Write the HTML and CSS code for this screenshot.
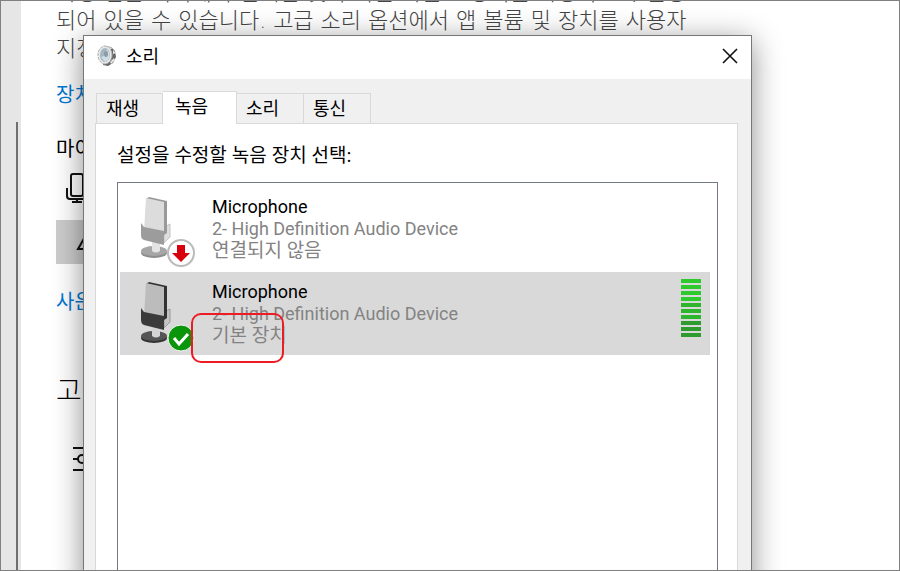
FILE: index.html
```html
<!DOCTYPE html>
<html lang="ko">
<head>
    <meta charset="UTF-8">
    <meta name="viewport" content="width=device-width, initial-scale=1.0">
    <title>소리</title>
    <link rel="stylesheet" href="styles.css">
</head>
<body>
    <div class="screen">
        <div class="sidebar"></div>
        <main class="settings">
            <p class="note">특정 앱은 여기에서 선택한 것과 다른 사운드 장치를 사용하도록 설정<br>되어 있을 수 있습니다. 고급 소리 옵션에서 앱 볼륨 및 장치를 사용자<br>지정합니다.</p>
            <a class="link" href="#">장치 속성</a>
            <h3 class="label">마이크 테스트</h3>
            <svg class="mic" width="24" height="32" viewBox="0 0 24 32" fill="none" stroke="#111" stroke-width="2">
                <rect x="5" y="1" width="12" height="22" rx="2"/>
                <path d="M1 15v8q0 3 3 3h14q3 0 3-3v-8M11 26v3M6 29h10"/>
            </svg>
            <button class="trouble">
                <svg width="20" height="18" viewBox="0 0 20 18" fill="none" stroke="#111" stroke-width="2"><path d="M10 2L2 16h16zM10 7v5"/></svg>
                문제 해결
            </button>
            <a class="link manage" href="#">사운드 장치 관리</a>
            <h2 class="heading">고급 사운드 옵션</h2>
            <svg class="sliders" width="28" height="26" viewBox="0 0 28 26" fill="none" stroke="#111" stroke-width="2">
                <path d="M0 2h28M0 13h5M13 13h15M0 24h28"/>
                <circle cx="9" cy="13" r="4"/>
            </svg>
        </main>

        <section class="dialog">
            <header class="titlebar">
                <svg width="20" height="22" viewBox="0 0 20 22">
                    <path d="M8 1l6 1 4 4 1 6-3 6-5 3-5-1z" fill="#666"/>
                    <path d="M10 1l5 2-2 3zM16 5l3 3-3 1zM17 13l1 2-4 4-1-2z" fill="#e4e4e4"/>
                    <ellipse cx="8" cy="10" rx="7" ry="9" fill="#e8e8e8" stroke="#aaa" stroke-dasharray="3 1"/>
                    <ellipse cx="8" cy="10" rx="5" ry="7" fill="#a4b6c0"/>
                    <path d="M4 12q5-1 6-8 4 5 2 10-2 4-5 2z" fill="#cfdde4"/>
                    <ellipse cx="9" cy="9" rx="2" ry="3" fill="#8c9ca6"/>
                </svg>
                <h1 class="title">소리</h1>
                <button class="close" aria-label="닫기">
                    <svg width="16" height="16" viewBox="0 0 16 16" stroke="#111" stroke-width="1.6"><path d="M1 1l14 14M15 1L1 15"/></svg>
                </button>
            </header>
            <div class="tabs">
                <button class="tab">재생</button>
                <button class="tab active">녹음</button>
                <button class="tab">소리</button>
                <button class="tab">통신</button>
            </div>
            <div class="panel">
                <p class="prompt">설정을 수정할 녹음 장치 선택:</p>
                <ul class="devices">
                    <li class="device">
                        <svg class="icon" width="60" height="74" viewBox="0 0 60 74">
                            <ellipse cx="19" cy="57" rx="13" ry="5" fill="#8c8c8c"/>
                            <ellipse cx="19" cy="55" rx="13" ry="5" fill="#a6a6a6"/>
                            <path d="M17 46h8v9q-4 3-8 0z" fill="#e4e4e4"/>
                            <path d="M29 31l6-3v13l-6 6z" fill="#dedede" stroke="#c4c4c4"/>
                            <path d="M11 3l3-2 18 4v32l-3 2z" fill="#999"/>
                            <path d="M11 2l18 4v32l-20-3z" fill="#dcdcdc"/>
                            <path d="M6 27l3 4 20 4v14l-20-5q-3-1-3-5z" fill="#9c9c9c"/>
                            <circle cx="46" cy="57" r="13" fill="#fff" stroke="#bbb" stroke-width="2"/>
                            <path d="M42 49h8v8h5l-9 9-9-9h5z" fill="#d9000d"/>
                        </svg>
                        <div class="info">
                            <p class="name">Microphone</p>
                            <p>2- High Definition Audio Device</p>
                            <p class="state">연결되지 않음</p>
                        </div>
                    </li>
                    <li class="device selected">
                        <svg class="icon" width="60" height="74" viewBox="0 0 60 74">
                            <ellipse cx="19" cy="57" rx="13" ry="5" fill="#333"/>
                            <ellipse cx="19" cy="55" rx="13" ry="5" fill="#555"/>
                            <path d="M17 46h8v9q-4 3-8 0z" fill="#d4d4d4"/>
                            <path d="M29 31l6-3v13l-6 6z" fill="#c4c4c4" stroke="#999"/>
                            <path d="M11 3l3-2 18 4v32l-3 2z" fill="#333"/>
                            <path d="M11 2l18 4v32l-20-3z" fill="#bcbcbc"/>
                            <path d="M6 27l3 4 20 4v14l-20-5q-3-1-3-5z" fill="#3a3a3a"/>
                            <circle cx="46" cy="57" r="13" fill="#0a950a" stroke="#f4f4f4" stroke-width="1"/>
                            <path d="M39 57l5 6 9-10" fill="none" stroke="#fff" stroke-width="3"/>
                        </svg>
                        <div class="info">
                            <p class="name">Microphone</p>
                            <p>2- High Definition Audio Device</p>
                            <p class="state marked">기본 장치</p>
                        </div>
                        <div class="meter">
                            <i></i><i></i><i></i><i></i><i></i><i></i><i></i><i></i><i></i><i></i>
                        </div>
                    </li>
                </ul>
            </div>
        </section>
    </div>
</body>
</html>
```
FILE: styles.css
```css
* {
    box-sizing: border-box;
}
body {
    margin: 0;
    font-family: "Open Sans", "Noto Sans CJK KR", sans-serif;
}
h1, h2, h3, p, ul {
    margin: 0;
    padding: 0;
    font-weight: normal;
}
button {
    border: none;
    padding: 0;
    font-family: inherit;
}
.screen {
    position: relative;
    display: flex;
    height: 100vh;
    overflow: hidden;
    border: 1px solid #808080;
    background-color: #fff;
}
.sidebar {
    width: 20px;
    flex-shrink: 0;
    background: linear-gradient(#707070, #707070) 15px 121px / 2px 100% no-repeat #e6e6e6;
}
.settings {
    display: flex;
    flex-direction: column;
    align-items: flex-start;
    flex: 1;
    padding-left: 35px;
    white-space: nowrap;
}
.note {
    margin-top: -22px;
    font-family: "DejaVu Sans", "Noto Sans CJK KR", sans-serif;
    font-size: 22px;
    font-weight: 300;
    line-height: 28px;
    color: #444;
}
.link {
    margin-top: 16px;
    font-size: 20px;
    line-height: 32px;
    color: #0078d4;
    text-decoration: none;
}
.label {
    margin-top: 24px;
    font-size: 20px;
    line-height: 28px;
}
.mic {
    margin: 10px 0 15px 10px;
}
.trouble {
    display: flex;
    align-items: center;
    gap: 8px;
    width: 160px;
    height: 44px;
    padding-left: 20px;
    font-size: 20px;
    background-color: #ccc;
}
.manage {
    margin-top: 22px;
}
.heading {
    margin-top: 52px;
    font-size: 28px;
    font-weight: 300;
    line-height: 40px;
}
.sliders {
    margin: 36px 0 0 17px;
}
.dialog {
    position: absolute;
    top: 34px;
    right: 147px;
    bottom: -40px;
    left: 82px;
    display: flex;
    flex-direction: column;
    border: 1px solid #777;
    background-color: #f0f0f0;
    box-shadow: 0 6px 28px rgba(0, 0, 0, 0.45);
}
.titlebar {
    display: flex;
    align-items: center;
    gap: 9px;
    height: 43px;
    padding: 0 13px 3px;
    background-color: #fff;
}
.title {
    flex: 1;
    font-size: 18px;
    line-height: 24px;
}
.close {
    display: flex;
    background: none;
}
.tabs {
    display: flex;
    align-items: flex-end;
    padding: 12px 12px 0;
}
.tab {
    width: 67px;
    height: 30px;
    padding: 0 0 2px 9px;
    text-align: left;
    font-size: 18px;
    line-height: 26px;
    color: #000;
    background-color: #f0f0f0;
    border: 1px solid #d9d9d9;
    border-bottom: none;
}
.tab + .tab {
    border-left: none;
}
.tab.active {
    position: relative;
    width: 74px;
    height: 33px;
    margin-bottom: -1px;
    padding: 0 0 5px 12px;
    background-color: #fff;
}
.panel {
    display: flex;
    flex-direction: column;
    flex: 1;
    margin: 0 13px 0 11px;
    padding: 16px 19px 0 21px;
    border: 1px solid #d9d9d9;
    background-color: #fff;
}
.prompt {
    font-size: 19px;
    line-height: 30px;
}
.devices {
    flex: 1;
    margin-top: 12px;
    padding: 4px 7px 0 2px;
    list-style: none;
    border: 1px solid #747983;
}
.device {
    display: flex;
    height: 83px;
    margin-bottom: 2px;
    padding: 4px 9px 0 15px;
}
.device.selected {
    background-color: #d9d9d9;
}
.icon {
    margin-top: 5px;
}
.info {
    flex: 1;
    padding: 5px 0 0 17px;
    font-family: Roboto, "Noto Sans CJK KR", sans-serif;
    font-size: 18px;
    line-height: 22px;
    color: #838383;
}
.name {
    color: #000;
}
.state {
    position: relative;
    width: max-content;
    font-size: 19px;
}
.marked::after {
    content: "";
    box-sizing: border-box;
    position: absolute;
    top: -12px;
    left: -21px;
    width: 93px;
    height: 50px;
    border: 2px solid #ed1c24;
    border-radius: 10px;
}
.meter {
    display: flex;
    flex-direction: column;
    gap: 2px;
    padding-top: 3px;
}
.meter i {
    width: 20px;
    height: 4px;
    background-color: #2dc92d;
}
.meter i:nth-child(n+5) {
    background-color: #2db52d;
}
.meter i:nth-child(n+8) {
    background-color: #2d9b2d;
}
```
